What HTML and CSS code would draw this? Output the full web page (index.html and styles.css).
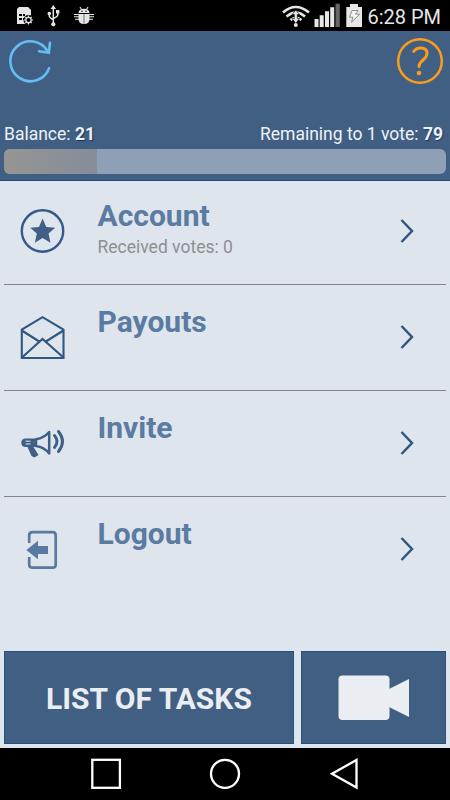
FILE: index.html
```html
<!DOCTYPE html>
<html lang="en">
<head>
    <meta charset="UTF-8">
    <meta name="viewport" content="width=device-width, initial-scale=1.0">
    <title>Account</title>
    <link rel="stylesheet" href="styles.css">
</head>
<body>

    <!-- Status Bar -->
    <div class="status-bar">
        <svg width="100" height="31" viewBox="0 0 100 31" fill="#e6e6e6">
            <path d="M19 7h9l3 3v9l-3 5H17V9z"/>
            <path d="M19 14h3v2h-3zM23 14h2v2h-2zM19 18h3v2h-3zM23 18h2v2h-2z" fill="#000"/>
            <circle cx="28.5" cy="20" r="5" fill="#000"/>
            <circle cx="28.5" cy="20" r="2.7" fill="none" stroke="#e6e6e6" stroke-width="1.3"/>
            <path d="M28.5 15.5v1.5M28.5 23v1.5M24 20h1.5M31.5 20h1.5M25.3 16.8l1 1M30.7 22.2l1 1M31.7 16.8l-1 1M26.3 22.2l-1 1" stroke="#e6e6e6" stroke-width="1.2"/>
            <path d="M53.3 8v16M49.3 13.5v2.5q0 1.5 4 3.8M57.8 12v3q0 1.5-4.5 3.5" fill="none" stroke="#e6e6e6" stroke-width="1.5"/>
            <path d="M53.3 5l2.7 4h-5.4zM56 10h3.4v3.4H56z"/>
            <circle cx="49.3" cy="13.5" r="1.8"/>
            <circle cx="53.3" cy="24.3" r="2.1"/>
            <path d="M78.5 13q0-4 5.5-4.2Q89.5 9 89.5 13zM78.5 14H89.5v5q0 5-5.5 5t-5.5-5z"/>
            <path d="M80 7l1.5 2.5M88 7l-1.5 2.5M74 14.5h5M74 16.7h5M75 19.2h4M89 14.5h5M89 16.7h5M89 19.2h4" stroke="#e6e6e6" stroke-width="1.1"/>
            <path d="M84 14v9.5" stroke="#555" stroke-width=".8"/>
            <circle cx="82" cy="11.3" r=".7" fill="#000"/>
            <circle cx="86" cy="11.3" r=".7" fill="#000"/>
        </svg>
        <div class="status-right">
            <svg width="82" height="31" viewBox="0 0 82 31">
                <path d="M1 12.5q12.5-11 26 0M4.5 16.5q9.5-8 18.5 0M8.5 20q5.5-4.5 11 0" fill="none" stroke="#e6e6e6" stroke-width="2.6"/>
                <path d="M13.8 10l3.7 4.5h-2.2v4h2.2l-3.7 5-3.7-5h2.2v-4h-2.2z" fill="#e6e6e6" stroke="#000" stroke-width=".6"/>
                <circle cx="13.8" cy="25" r="2" fill="#e6e6e6"/>
                <path d="M32.5 19h4v8h-4zM37.7 15.3h4V27h-4zM43 11.3h4V27h-4zM48.2 7.3h4V27h-4z" fill="#e6e6e6"/>
                <path d="M53.5 3.7h4.3V27h-4.3z" fill="#666"/>
                <path d="M68 4h8v3h4v20H64.3V7H68z" fill="#e6e6e6"/>
                <path d="M70 10.5h6l-2.5 3.7h4.2l-8.2 8 1.5-5h-3.5z" fill="#f5f5f5" stroke="#777" stroke-width=".8"/>
            </svg>
            <span class="clock">6:28 PM</span>
        </div>
    </div>

    <!-- Header with balance -->
    <div class="header">
        <div class="header-icons">
            <svg width="44" height="48" viewBox="0 0 44 48" fill="none" stroke="#64bdf4" stroke-width="2.6" stroke-linecap="round">
                <path d="M40.1 31.2A20 20 0 1 1 38.6 14.1"/>
                <path d="M41 5.7L39.8 15.7 30 14.2"/>
            </svg>
            <svg width="48" height="48" viewBox="0 0 48 48" fill="none" stroke="#fb9c1c">
                <circle cx="24" cy="24" r="21.8" stroke-width="2.5"/>
                <path d="M17.7 14.5C21 9.5 31 9.5 31 16.5C31 22.5 23 23.5 23 29.5" stroke-width="3" stroke-linecap="round"/>
                <circle cx="23" cy="36" r="2.3" fill="#fb9c1c" stroke="none"/>
            </svg>
        </div>
        <div class="balance">
            <span>Balance: <b>21</b></span>
            <span>Remaining to 1 vote: <b>79</b></span>
        </div>
        <div class="progress">
            <div class="progress-value" style="width: 21%"></div>
        </div>
    </div>

    <!-- Menu -->
    <div class="menu">
        <div class="menu-item">
            <svg class="menu-icon" viewBox="0 0 48 48">
                <circle cx="24.5" cy="24" r="20.7" fill="none" stroke="#34598a" stroke-width="2.4"/>
                <path d="M24.6 11.6L28.2 19.9 37.2 20.7 30.5 26.6 32.5 35.7 24.6 30.9 16.9 35.7 18.8 26.6 12.2 20.7 21 19.9z" fill="#3f5f86"/>
            </svg>
            <div class="menu-text">
                <h2>Account</h2>
                <p>Received votes: 0</p>
            </div>
            <svg class="arrow" viewBox="0 0 16 26"><path d="M2.5 2L13 13 2.5 24"/></svg>
        </div>
        <div class="menu-item">
            <svg class="menu-icon" viewBox="0 0 48 48" fill="none" stroke="#2f5781" stroke-width="2.1">
                <path d="M3.8 45V16.7L24.5 4.2 45.5 16.7V45z"/>
                <path d="M3.8 17.5L22 29M45.5 17.5L27 29M4 44.5L24.5 26 45.5 44.5"/>
            </svg>
            <div class="menu-text">
                <h2>Payouts</h2>
            </div>
            <svg class="arrow" viewBox="0 0 16 26"><path d="M2.5 2L13 13 2.5 24"/></svg>
        </div>
        <div class="menu-item">
            <svg class="menu-icon" viewBox="0 0 48 48" fill="#3f5f86">
                <path d="M7 19.5H18V28H15.5L20.5 36 16.5 38.5 13.5 37 9.5 28H7Q3.3 27.5 3.3 23.7T7 19.5z"/>
                <path d="M7.5 22.2h5M7.5 25h5" stroke="#dfe5ec" stroke-width="1"/>
                <path d="M18 20.3Q26 19 31.2 13V34.5Q26 28 18 27z" fill="none" stroke="#3f5f86" stroke-width="2.5" stroke-linejoin="round"/>
                <path d="M36.5 16.5Q41.5 22.5 36.5 28.5M40.5 12.5Q48.5 22.5 40.5 32.5" fill="none" stroke="#3f5f86" stroke-width="2.9" stroke-linecap="round"/>
            </svg>
            <div class="menu-text">
                <h2>Invite</h2>
            </div>
            <svg class="arrow" viewBox="0 0 16 26"><path d="M2.5 2L13 13 2.5 24"/></svg>
        </div>
        <div class="menu-item">
            <svg class="menu-icon" viewBox="0 0 48 48">
                <path d="M11.2 18V10.5Q11.2 7.2 14.5 7.2H34.5Q37.7 7.2 37.7 10.5V39.5Q37.7 42.7 34.5 42.7H14.5Q11.2 42.7 11.2 39.5V32" fill="none" stroke="#587aa0" stroke-width="2.7"/>
                <path d="M8.3 25L20 15.7V21H30V29H20V34.3z" fill="#587aa0"/>
            </svg>
            <div class="menu-text">
                <h2>Logout</h2>
            </div>
            <svg class="arrow" viewBox="0 0 16 26"><path d="M2.5 2L13 13 2.5 24"/></svg>
        </div>
    </div>

    <!-- Bottom Buttons -->
    <div class="buttons">
        <button class="btn btn-tasks">LIST OF TASKS</button>
        <button class="btn btn-video">
            <svg width="72" height="46" viewBox="0 0 72 46" fill="#eaedf2">
                <rect x="0.5" y="0.5" width="51" height="44.5" rx="4"/>
                <path d="M51 14L71 4V42L51 32z"/>
            </svg>
        </button>
    </div>

    <!-- Navigation Bar -->
    <div class="nav-bar">
        <svg width="32" height="32" viewBox="0 0 32 32"><rect x="2.3" y="1.8" width="27.6" height="28"/></svg>
        <svg width="32" height="32" viewBox="0 0 32 32"><circle cx="16" cy="15.8" r="14"/></svg>
        <svg width="32" height="32" viewBox="0 0 32 32"><path d="M28.5 2V29.5L4 15.7z"/></svg>
    </div>

</body>
</html>
```

FILE: styles.css
```css
* {
    box-sizing: border-box;
}
body {
    font-family: Roboto, sans-serif;
    margin: 0;
    height: 800px;
    display: flex;
    flex-direction: column;
    background: #dfe5ec;
    overflow: hidden;
}
svg {
    display: block;
    flex-shrink: 0;
}
h2, p {
    margin: 0;
}
.status-bar {
    height: 31px;
    background: #000;
    display: flex;
    justify-content: space-between;
}
.status-right {
    display: flex;
    padding-right: 9px;
}
.clock {
    width: 77px;
    text-align: right;
    white-space: nowrap;
    color: #e6e6e6;
    font-size: 20px;
    line-height: 34px;
}
.header {
    height: 150px;
    padding: 6px 4px 0;
    background: #415f83;
    border-bottom: 1px solid #1d5080;
}
.header-icons {
    display: flex;
    justify-content: space-between;
    padding: 0 2px 0 5px;
}
.balance {
    display: flex;
    justify-content: space-between;
    padding: 38px 3px 0 0;
    color: #eef2f7;
    font-size: 17.5px;
    line-height: 22px;
}
.balance b {
    text-shadow: 1px 1px 1px #1d3a5c;
}
.progress {
    height: 25px;
    margin-top: 4px;
    border-radius: 6px;
    background: #8e9fb6;
    overflow: hidden;
}
.progress-value {
    height: 100%;
    background: linear-gradient(to right, #959593, #858d99);
}
.menu {
    flex: 1;
    padding: 0 4px;
}
.menu-item {
    display: flex;
    height: 106px;
    padding: 28px 31px 0 14px;
    border-bottom: 1px solid #858585;
}
.menu-item:first-child {
    height: 104px;
    padding-top: 26px;
}
.menu-item:last-child {
    border-bottom: none;
}
.menu-icon {
    width: 48px;
    height: 48px;
}
.menu-text {
    flex: 1;
    padding-left: 31.5px;
    margin-top: -9px;
}
.menu-text h2 {
    color: #5a7ba2;
    font-size: 30px;
    line-height: 36px;
}
.menu-text p {
    color: #8c8f92;
    font-size: 17.5px;
    line-height: 22px;
    margin-top: 2px;
}
.arrow {
    width: 16px;
    height: 26px;
    margin-top: 11px;
    fill: none;
    stroke: #2f5781;
    stroke-width: 2.5;
}
.buttons {
    display: flex;
    gap: 7px;
    height: 97px;
    padding: 0 4px 4px;
}
.btn {
    display: flex;
    align-items: center;
    justify-content: center;
    padding: 1px 0 0;
    border: 1px solid #24527f;
    background: #415f83;
    color: #eaedf2;
    font-family: inherit;
    font-size: 30px;
    font-weight: bold;
}
.btn-tasks {
    width: 290px;
}
.btn-video {
    flex: 1;
    padding-top: 0;
}
.nav-bar {
    display: flex;
    justify-content: center;
    gap: 87px;
    height: 52px;
    padding-top: 10px;
    background: #000;
}
.nav-bar svg {
    fill: none;
    stroke: #fff;
    stroke-width: 2.3;
}
```
